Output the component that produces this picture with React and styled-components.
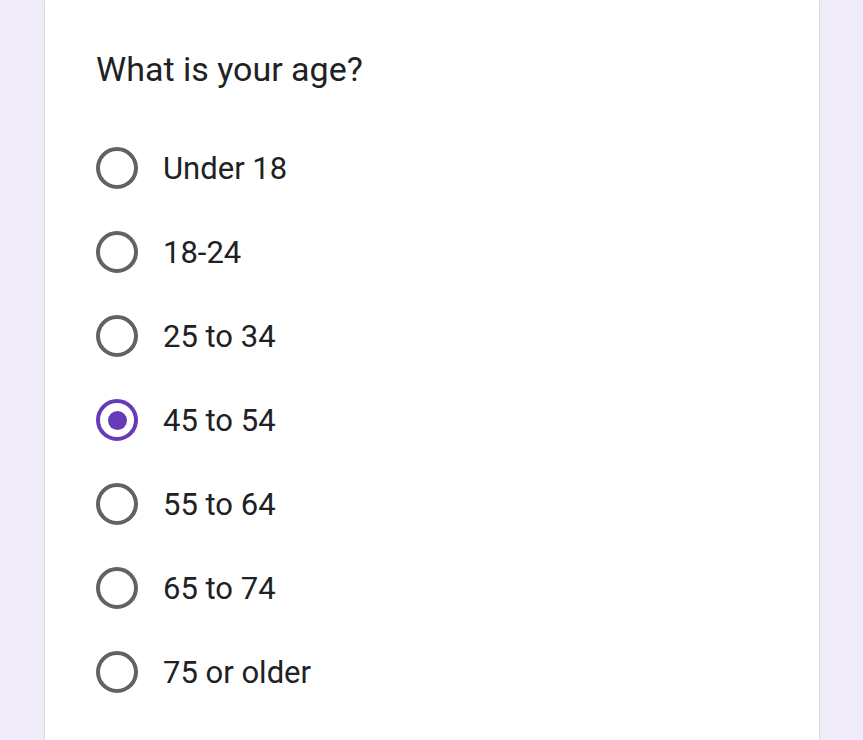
import React, { useState } from 'react'
import styled, { createGlobalStyle } from 'styled-components'

const GlobalStyle = createGlobalStyle`
html, body {
  margin: 0;
  background: #f0ebf8;
  font-family: Roboto, "Liberation Sans", sans-serif;
  overflow: hidden;
}
`

const options = ['Under 18', '18-24', '25 to 34', '45 to 54', '55 to 64', '65 to 74', '75 or older']

function App() {
	const [selected, setSelected] = useState('45 to 54')

	return (
		<Page>
			<GlobalStyle />
			<Card>
				<Question>What is your age?</Question>
				<OptionList>
					{options.map((opt) => (
						<Option key={opt} onClick={() => setSelected(opt)}>
							<Radio checked={selected === opt} />
							<Label>{opt}</Label>
						</Option>
					))}
				</OptionList>
			</Card>
		</Page>
	)
}

export default App

const Page = styled.div`
padding-left: 44px;
height: 740px;
overflow: hidden;
`

const Card = styled.div`
width: 776px;
transform: translateY(-10px);
height: 770px;
background: #fff;
border: 1px solid #dadce0;
border-radius: 12px;
padding: 57px 0 0 51px;
box-sizing: border-box;
`

const Question = styled.div`
font-size: 34px;
line-height: 42px;
color: #202124;
margin-bottom: 36px;
`

const OptionList = styled.div`
display: flex;
flex-direction: column;
`

const Option = styled.div`
display: flex;
align-items: center;
height: 84px;
cursor: pointer;
`

const Radio = styled.div`
width: 42px;
height: 42px;
box-sizing: border-box;
border-radius: 50%;
border: 4px solid ${(p) => (p.checked ? '#673ab7' : '#5f6368')};
display: flex;
align-items: center;
justify-content: center;
flex-shrink: 0;

&::after {
  content: '';
  display: ${(p) => (p.checked ? 'block' : 'none')};
  width: 19px;
  height: 19px;
  border-radius: 50%;
  background: #673ab7;
}
`

const Label = styled.span`
margin-left: 25px;
font-size: 31px;
color: #202124;
`
